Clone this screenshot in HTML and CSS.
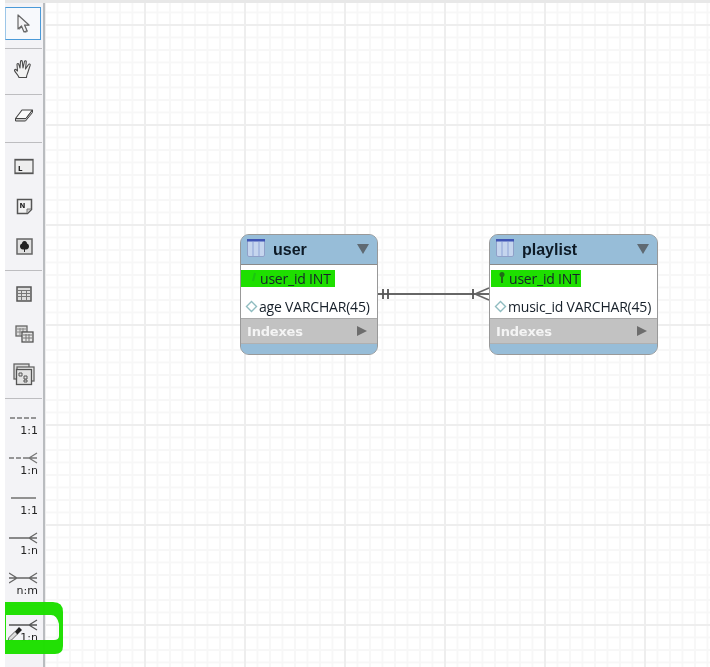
FILE: index.html
```html
<!DOCTYPE html>
<html lang="en">
<head>
<meta charset="utf-8">
<title>EER Diagram</title>
<link rel="stylesheet" href="styles.css">
</head>
<body>
<div class="page">
  <aside class="toolbar">
    <div class="group group-a">
      <div class="tool tool-selected">
        <svg width="16" height="20" viewBox="0 0 16 20"><path d="M3 2v14l3.500-3 2.500 6 3-1.300-2.500-5.700H14z" fill="#999"/><path d="M2 1v14l3.500-3 2.500 6 3-1.300-2.500-5.700H13z" fill="#f4f4f6" stroke="#666" stroke-width="1.200" stroke-linejoin="round"/></svg>
      </div>
    </div>
    <div class="group group-b">
      <div class="tool">
        <svg width="22" height="20" viewBox="0 0 22 20"><path d="M6 18.500c-1-3-4-5-4.500-7-.2-1 .8-1.500 1.800-.7L4.500 12 4 5.500c0-1.200 1.500-1.300 1.800-.2L7 9l.5-6.500c.1-1.200 1.700-1.200 1.800 0L10 9l1.500-6.500c.3-1.100 1.900-.9 1.800.3L12.500 10l3-4.500c.6-1 2-.4 1.700.7L15 13c-.5 2-1.500 3-1.500 5.500z" fill="#f2f2f2" stroke="#4a4a4a" stroke-width="1.100" stroke-linejoin="round"/></svg>
      </div>
    </div>
    <div class="group group-c">
      <div class="tool">
        <svg width="20" height="15" viewBox="0 0 20 15"><path d="M1.500 10.500 8 2h10.500L12 10.500z" fill="#fafafa" stroke="#444" stroke-width="1.100" stroke-linejoin="round"/><path d="M1.500 10.500V13H11.500L18.500 4.500V2L12 10.500z" fill="#ccc" stroke="#444" stroke-width="1" stroke-linejoin="round"/></svg>
      </div>
    </div>
    <div class="group group-d">
      <div class="tool">
        <svg width="20" height="17" viewBox="0 0 20 17"><rect x="1" y="1.500" width="18" height="14" fill="#eee" stroke="#666" stroke-width="1.400"/><path d="M1 1h18v1.500H1zM1 14.500h18V16H1z" fill="#555"/><text x="4" y="12.500" class="glyph">L</text></svg>
      </div>
      <div class="tool">
        <svg width="17" height="17" viewBox="0 0 17 17"><path d="M1.500 1.500h14v10l-4 4h-10z" fill="#f2f2f2" stroke="#555" stroke-width="1.500"/><path d="M11 15v-4h4" fill="#ccc" stroke="#777"/><text x="3.500" y="10" class="glyph">N</text></svg>
      </div>
      <div class="tool">
        <svg width="17" height="17" viewBox="0 0 17 17"><rect x="1" y="1" width="15" height="15" fill="#e0e0e0" stroke="#666" stroke-width="1.500"/><path d="M8.500 3c2 0 2.500 1.500 2.500 2.500 1.300 .4 2 1.500 2 3s-1 3-3 3H9V14H8v-2.500H7c-2 0-3-1.500-3-3s.7-2.600 2-3C6 4.500 6.500 3 8.500 3z" fill="#222"/></svg>
      </div>
    </div>
    <div class="group group-e">
      <div class="tool">
        <svg width="16" height="16" viewBox="0 0 16 16"><rect x="1" y="1" width="14" height="14" fill="#ddd" stroke="#555" stroke-width="1.500"/><path d="M2 4.500h12M2 7.500h12M2 10.500h12M5.500 4v10M10.500 4v10" stroke="#777" fill="none"/></svg>
      </div>
      <div class="tool">
        <svg width="19" height="18" viewBox="0 0 19 18"><rect x="1" y="1" width="11" height="10" fill="#ddd" stroke="#666" stroke-width="1.300"/><path d="M2 4h9M2 7h9M5 3v7M8 3v7" stroke="#888"/><rect x="7" y="7" width="11" height="10" fill="#e6e6e6" stroke="#555" stroke-width="1.300"/><path d="M8 10h9M8 13h9M11 9v7M14 9v7" stroke="#777"/></svg>
      </div>
      <div class="tool">
        <svg width="22" height="23" viewBox="0 0 22 23"><rect x="1" y="1" width="15" height="15" fill="#ddd" stroke="#666" stroke-width="1.300"/><rect x="4" y="4" width="17" height="14" fill="#eee" stroke="#666" stroke-width="1.300"/><rect x="3.500" y="6.500" width="15" height="15" fill="#e4e4e4" stroke="#555" stroke-width="1.300"/><path d="M6 10h3v3H6zM11 13h3v3h-3zM11 17h3v2h-3z" fill="none" stroke="#555"/></svg>
      </div>
    </div>
    <div class="rel"><svg class="rel-icon" width="30" height="12" viewBox="0 0 30 12"><path d="M1 6h5M8 6h5M15 6h5M22 6h5" stroke="#777" stroke-width="1.300"/></svg><span class="rel-label">1:1</span></div>
    <div class="rel"><svg class="rel-icon" width="30" height="12" viewBox="0 0 30 12"><path d="M0 6h5M7 6h5M14 6h14M20 6l8-5M20 6l8 5" stroke="#777" stroke-width="1.300" fill="none"/></svg><span class="rel-label">1:n</span></div>
    <div class="rel"><svg class="rel-icon" width="30" height="12" viewBox="0 0 30 12"><path d="M2 6h25" stroke="#666" stroke-width="1.400"/></svg><span class="rel-label">1:1</span></div>
    <div class="rel"><svg class="rel-icon" width="30" height="12" viewBox="0 0 30 12"><path d="M0 6h28M20 6l8-5M20 6l8 5" stroke="#666" stroke-width="1.300" fill="none"/></svg><span class="rel-label">1:n</span></div>
    <div class="rel rel-last"><svg class="rel-icon" width="30" height="12" viewBox="0 0 30 12"><path d="M0 6h28M20 6l8-5M20 6l8 5M8 6L0 1M8 6L0 11" stroke="#666" stroke-width="1.300" fill="none"/></svg><span class="rel-label">n:m</span></div>
    <div class="rel"><svg class="rel-icon" width="30" height="12" viewBox="0 0 30 12"><path d="M0 6h28M20 6l8-5M20 6l8 5" stroke="#555" stroke-width="1.300" fill="none"/></svg><span class="rel-label">1:n</span>
      <svg class="dropper" width="16" height="16" viewBox="0 0 16 16"><path d="M1 15l1-3.500 6-6L10.500 8l-6 6z" fill="#ddd" stroke="#666"/><path d="M8 5.500 12 1l3 3-4.500 4.500z" fill="#222"/></svg>
    </div>
  </aside>
  <main class="canvas">
    <svg class="link" width="120" height="20" viewBox="0 0 120 20">
      <path d="M0 10h111" stroke="#666" stroke-width="1.800" fill="none"/>
      <path d="M5 5v10M10 5v10M95 5v10" stroke="#555" stroke-width="1.800" fill="none"/>
      <path d="M97 10l14-6M97 10l14 6" stroke="#666" stroke-width="1.500" fill="none"/>
    </svg>
    <section class="table table-user">
      <header class="table-head">
        <svg class="table-icon" width="18" height="18" viewBox="0 0 18 18"><rect x="0.500" y="0.500" width="17" height="17" rx="1.500" fill="#c5d5ee" stroke="#8fa0c8"/><rect x="0" y="0" width="18" height="2.500" fill="#3f55b5"/><path d="M6 3v14M12 3v14" stroke="#8da3d6"/></svg>
        <span class="table-name">user</span>
        <span class="tri-down"></span>
      </header>
      <div class="table-rows">
        <div class="row"><span class="mark mark-green"><svg class="key key-faint" width="12" height="13" viewBox="0 0 12 13"><path d="M8 2 6 10" stroke="#1cc410" stroke-width="2"/></svg><span class="col">user_id INT</span></span></div>
        <div class="row"><svg class="diamond" width="13" height="13" viewBox="0 0 13 13"><path d="M6.500 1.500l5 5-5 5-5-5z" fill="#fff" stroke="#8fbcc0" stroke-width="1.400"/></svg><span class="col">age VARCHAR(45)</span></div>
      </div>
      <div class="table-index"><span class="index-label">Indexes</span><span class="tri-right"></span></div>
      <div class="table-foot"></div>
    </section>
    <section class="table table-playlist">
      <header class="table-head">
        <svg class="table-icon" width="18" height="18" viewBox="0 0 18 18"><rect x="0.500" y="0.500" width="17" height="17" rx="1.500" fill="#c5d5ee" stroke="#8fa0c8"/><rect x="0" y="0" width="18" height="2.500" fill="#3f55b5"/><path d="M6 3v14M12 3v14" stroke="#8da3d6"/></svg>
        <span class="table-name">playlist</span>
        <span class="tri-down"></span>
      </header>
      <div class="table-rows">
        <div class="row"><span class="mark mark-green"><svg class="key" width="12" height="13" viewBox="0 0 12 13"><circle cx="6" cy="3.500" r="2.500" fill="#1f6a17"/><path d="M6 5v7" stroke="#1f6a17" stroke-width="2"/></svg><span class="col">user_id INT</span></span></div>
        <div class="row"><svg class="diamond" width="13" height="13" viewBox="0 0 13 13"><path d="M6.500 1.500l5 5-5 5-5-5z" fill="#fff" stroke="#8fbcc0" stroke-width="1.400"/></svg><span class="col">music_id VARCHAR(45)</span></div>
      </div>
      <div class="table-index"><span class="index-label">Indexes</span><span class="tri-right"></span></div>
      <div class="table-foot"></div>
    </section>
  </main>
  <svg class="highlight" width="60" height="56" viewBox="0 0 60 56"><path fill-rule="evenodd" d="M0 2h48q10 0 10 10v34q0 8-8 8H0zM1 15v25h48q5 0 5-4V24q-2-9-8-9z" fill="#1edf00" fill-opacity=".98"/></svg>
</div>
</body>
</html>
```
FILE: styles.css
```css
* { box-sizing: border-box; }
html, body { margin: 0; padding: 0; height: 100%; background: #fff; overflow: hidden; }
.page { position: relative; width: 710px; height: 667px; display: flex; padding: 3px 0 0 5px; background: linear-gradient(#e8e8e8, #e8e8e8) 5px 0 / 705px 3px no-repeat #fff; filter: blur(0.4px); }

.toolbar { width: 40px; height: 664px; flex: none; background: #f3f3f6; border-right: 2px solid #b9bcbf; font-family: "DejaVu Sans", sans-serif; }
.group { border-bottom: 1px solid #bdbdc0; margin-right: 1px; }
.group-a { padding: 4px 0 8px; }
.group-b { padding: 0 0 5px; }
.group-c { padding: 0 0 7px; }
.group-d { padding: 3px 0 4px; }
.group-e { padding: 3px 0 4px; }
.tool { height: 40px; display: flex; align-items: center; justify-content: center; padding-left: 1px; }
.tool-selected { height: 33px; width: 36px; background: #f7f9fc; border: 1px solid #4a9ad8; border-left-color: #9cc6e8; margin-right: 1px; }
.glyph { font: bold 7px "DejaVu Sans", sans-serif; fill: #222; }

.rel { height: 40px; position: relative; display: flex; flex-direction: column; align-items: flex-end; padding: 13px 5px 0 0; }
.rel-icon { flex: none; margin-right: -1px; }
.rel-label { font-size: 11px; line-height: 13px; color: #222; }
.rel-last { height: 47px; border-bottom: 1px solid #bdbdc0; }
.dropper { position: absolute; left: 2px; top: 20px; }

.canvas { position: relative; flex: 1; background-color: #fff;
  background-image:
    linear-gradient(#eeeeee 2px, transparent 2px),
    linear-gradient(90deg, #eeeeee 2px, transparent 2px),
    linear-gradient(#f7f7f7 2px, transparent 2px),
    linear-gradient(90deg, #f7f7f7 2px, transparent 2px);
  background-size: 100px 100px, 100px 100px, 12.5px 12.5px, 12.5px 12.5px;
  background-position: 0 21px, -1px 0, 0 8.500px, -1px 0;
}

.link { position: absolute; left: 333px; top: 281px; }

.table { position: absolute; top: 231px; display: flex; flex-direction: column; height: 121px; border: 1px solid #999; border-radius: 9px; overflow: hidden; background: #97bdd8; font-family: "Open Sans", sans-serif; }
.table-user { left: 195px; width: 138px; }
.table-playlist { left: 444px; width: 169px; }
.table-head { height: 30px; flex: none; display: flex; align-items: center; padding: 0 8px 0 6px; background: #97bdd8; border-bottom: 1px solid #8a8a8a; }
.table-icon { flex: none; margin-right: 8px; margin-top: -3px; }
.table-name { flex: 1; font: bold 16px "Liberation Sans", sans-serif; color: #0d1a26; padding-top: 1px; }
.tri-down { width: 0; height: 0; border-left: 6px solid transparent; border-right: 6px solid transparent; border-top: 10px solid #5f6a73; margin-top: -2px; }

.table-rows { height: 53px; flex: none; background: #fff; padding: 5px 0 0 0; display: flex; flex-direction: column; }
.row { height: 28px; flex: none; display: flex; align-items: center; padding-left: 4px; font-size: 14px; color: #17202a; letter-spacing: -0.2px; white-space: nowrap; }
.row .col { margin-left: 1px; }
.row:first-child { height: 17px; padding-left: 0; margin-bottom: 5px; }
.mark { display: flex; align-items: center; height: 17px; padding: 0 4px 0 6px; }
.mark-green { background: #1edf00; }
.table-playlist .mark { margin-left: 1px; padding: 0 1px 0 5px; }
.key { flex: none; margin-top: -3px; }
.diamond { flex: none; }

.table-index { height: 26px; flex: none; display: flex; align-items: center; justify-content: space-between; padding: 0 10px 0 6px; background: #c2c2c2; border-top: 1px solid #a9a9a9; border-bottom: 1px solid #b0b0b0; }
.index-label { font: bold 13px "DejaVu Sans", sans-serif; color: #f4f4f4; letter-spacing: -0.2px; }
.tri-right { width: 0; height: 0; border-top: 5px solid transparent; border-bottom: 5px solid transparent; border-left: 10px solid #6d6d6d; }
.table-foot { flex: 1; background: #97bdd8; }

.highlight { position: absolute; left: 5px; top: 600px; }
```
